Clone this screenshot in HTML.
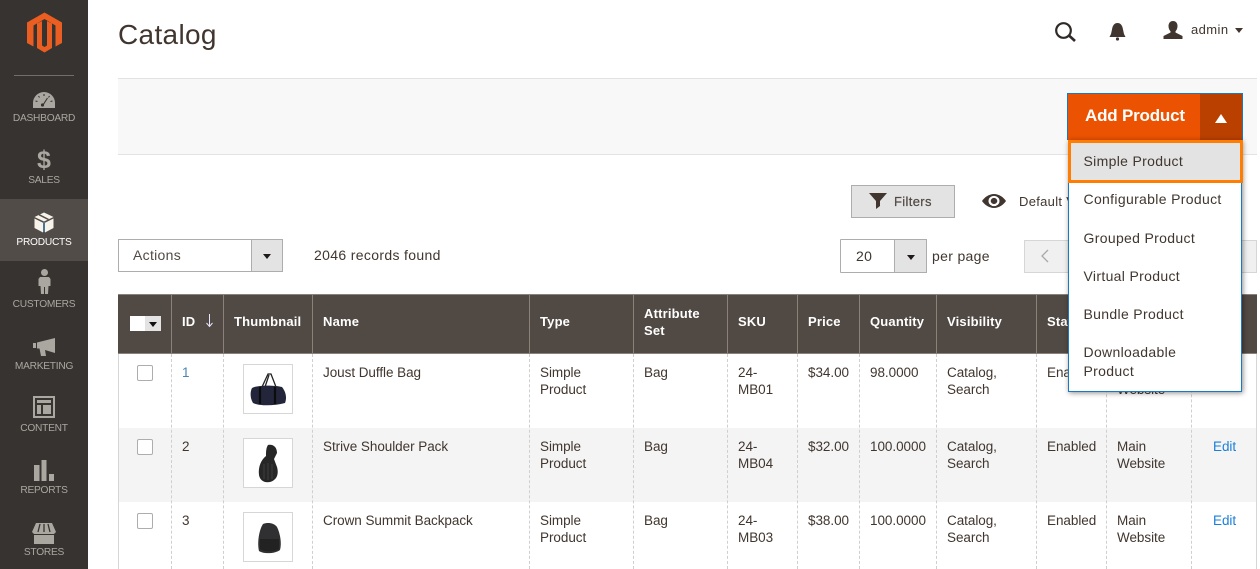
<!DOCTYPE html>
<html><head><meta charset="utf-8"><style>
html,body{margin:0;padding:0;background:#fff}
#p{position:relative;width:1260px;height:569px;overflow:hidden;background:#fff;font-family:"Liberation Sans",sans-serif;font-size:13.5px;color:#41362f;letter-spacing:-.05px}
#p div,#p svg,#p span.a{position:absolute}
.t{white-space:nowrap;line-height:17px}
.h{white-space:nowrap;line-height:17px;color:#fff;font-weight:bold;font-size:13px;letter-spacing:.18px}
.n{left:0;width:88px;text-align:center;font-size:10.2px;letter-spacing:-.25px;color:#aaa6a0;line-height:12px;white-space:nowrap}
.v{width:0;top:354px;height:215px;border-left:1px dashed #cfcfcf}
.hv{width:1px;top:295px;height:58px;background:#8a817b}
.m{left:1083.5px;white-space:nowrap;font-size:14px;letter-spacing:.33px;line-height:19px;color:#41362f}
.thumb{left:243px;width:48px;height:48px;border:1px solid #d6d6d6;background:#fff}
.cb{left:137px;width:14px;height:14px;border:1px solid #adadad;border-radius:2px;background:#fff}
.e{color:#1a7fd8}
</style></head><body><div id="p">
<div style="left:0;top:0;width:88px;height:569px;background:#373330"></div>
<div style="left:0;top:199px;width:88px;height:62px;background:#514c47"></div>
<svg style="left:27px;top:12px" width="36" height="41" viewBox="0 0 36 41"><path fill="#eb5e21" d="M17.500 .5L35 10.500V31L28.500 34.500V13.500L17.500 7 6.500 13.500V34.500L0 31V10.500ZM10 11.500L15 9V33.500L17.500 35 20 33.500V9L25 11.500V36L17.500 40.500 10 36Z"/></svg>
<div style="left:14px;top:75px;width:60px;height:1px;background:#736e69"></div>

<svg style="left:33px;top:92px" width="22" height="16" viewBox="0 0 22 16"><path fill="#aaa6a0" d="M11 0A11 11 0 0 0 0 11V16H22V11A11 11 0 0 0 11 0Z"/><path stroke="#373330" stroke-width="1.100" fill="none" d="M11 2V4M5.500 4L6.500 5.500M2.500 9L4.500 9.500M16.500 4L15.500 5.500M19.500 9L17.500 9.500M14.500 6L10 13"/><circle cx="9.500" cy="13" r="1.600" fill="#373330"/></svg>
<div class="n" style="top:113px">DASHBOARD</div>
<div class="a" style="left:0;width:88px;top:146px;text-align:center;font-size:25px;line-height:28px;font-weight:bold;color:#aaa6a0;letter-spacing:0">$</div>
<div class="n" style="top:175px">SALES</div>
<svg style="left:34px;top:212px" width="20" height="21" viewBox="0 0 20 21"><path fill="#f7f3eb" d="M10 .5L19.500 5 10 9.500 .5 5ZM.5 6.500L9 10.700V20.500L.5 16ZM11 10.700L19.500 6.500V16L11 20.500Z"/><path stroke="#514c47" stroke-width="1.500" d="M5 2.700L14.500 7.500"/><path stroke="#45a5d8" stroke-width="1" d="M10 10V20"/></svg>
<div class="n" style="top:237px;color:#fff">PRODUCTS</div>
<svg style="left:38px;top:269px" width="13" height="25" viewBox="0 0 13 25"><circle cx="6.500" cy="3.500" r="3.500" fill="#aaa6a0"/><path fill="#aaa6a0" d="M2 8H11L12.500 10V17H10.500L10 25H7V18H6V25H3L2.500 17H.5V10Z"/></svg>
<div class="n" style="top:299px">CUSTOMERS</div>
<svg style="left:33px;top:338px" width="23" height="19" viewBox="0 0 23 19"><path fill="#aaa6a0" d="M0 5H3V10H0ZM4 4.500L22 0V15L12 12 13 18H8L6.500 10.500H4Z"/></svg>
<div class="n" style="top:361px">MARKETING</div>
<svg style="left:33px;top:396px" width="22" height="22" viewBox="0 0 22 22"><path fill="#aaa6a0" fill-rule="evenodd" d="M0 0H22V22H0ZM2 2V20H20V2ZM4 4H18V7H4ZM4 9H8V18H4ZM10 9H18V18H10Z"/></svg>
<div class="n" style="top:423px">CONTENT</div>
<svg style="left:34px;top:460px" width="20" height="21" viewBox="0 0 20 21"><path fill="#aaa6a0" d="M0 5H5.500V21H0ZM7.500 0H12.500V21H7.500ZM15 14H20V21H15Z"/></svg>
<div class="n" style="top:485px">REPORTS</div>
<svg style="left:32px;top:523px" width="24" height="21" viewBox="0 0 24 21"><path fill="#aaa6a0" d="M4 0H20L24 9 22 11H2L0 9ZM2 12H22V21H2Z"/><path stroke="#373330" stroke-width="1.300" d="M8 1L6 9M12 1V9M16 1L18 9"/></svg>
<div class="n" style="top:547px">STORES</div>

<div class="t" style="left:118px;top:16px;font-size:28px;line-height:38px;letter-spacing:.33px;color:#41362f">Catalog</div>
<svg style="left:1055px;top:22px" width="21" height="20" viewBox="0 0 21 20"><circle cx="8.500" cy="8.500" r="7.300" fill="none" stroke="#2f2a27" stroke-width="2.200"/><path stroke="#2f2a27" stroke-width="2.600" d="M14 13.500L20 19"/></svg>
<svg style="left:1109px;top:23px" width="17" height="18" viewBox="0 0 17 18"><path fill="#41362f" d="M8.500 0C12 0 13.500 3 14 6.500L15 11 16.500 14H.5L2 11 3 6.500C3.500 3 5 0 8.500 0Z"/><circle cx="8.500" cy="16" r="1.600" fill="#41362f"/></svg>
<svg style="left:1163px;top:21px" width="20" height="18" viewBox="0 0 20 18"><path fill="#41362f" d="M10 0C13 0 14.500 2.300 14.500 5 14.500 7.500 13.500 9.300 12.500 10.300V11.500L19.500 15V18H.5V15L7.500 11.500V10.300C6.500 9.300 5.500 7.500 5.500 5 5.500 2.300 7 0 10 0Z"/></svg>
<div class="t" style="left:1191px;top:21px;font-size:13px;letter-spacing:.42px">admin</div>
<div style="left:1235px;top:28px;border:4px solid transparent;border-top:5px solid #41362f;border-bottom:0"></div>

<div style="left:118px;top:78px;width:1139px;height:75px;background:#f8f8f8;border-top:1px solid #e3e3e3;border-bottom:1px solid #e3e3e3"></div>
<div style="left:1067px;top:93px;width:133px;height:46px;background:#eb5202;border-top:1px solid #1979c3;border-left:1px solid #1979c3"></div>
<div style="left:1200px;top:93px;width:42px;height:46px;background:#ba4000;border-top:1px solid #1979c3;border-right:1px solid #1979c3"></div>
<div class="t" style="left:1085px;top:105px;font-size:17px;line-height:22px;font-weight:bold;color:#fff;letter-spacing:-.2px">Add Product</div>
<div style="left:1215px;top:114px;border:6px solid transparent;border-bottom:9px solid #fff;border-top:0"></div>

<div style="left:851px;top:185px;width:102px;height:31px;background:#e3e3e3;border:1px solid #adadad"></div>
<svg style="left:869px;top:193px" width="18" height="16" viewBox="0 0 18 16"><path fill="#41362f" d="M0 0H18L11 8V13L7 16V8Z"/></svg>
<div class="t" style="left:894px;top:193px;font-size:13px;color:#514943;letter-spacing:.35px;-webkit-text-stroke:.2px #514943">Filters</div>
<svg style="left:982px;top:194px" width="24" height="14" viewBox="0 0 24 15" preserveAspectRatio="none"><path fill="#41362f" d="M12 0C17 0 21.500 3.500 24 7.500 21.500 11.500 17 15 12 15 7 15 2.500 11.500 0 7.500 2.500 3.500 7 0 12 0Z"/><circle cx="12" cy="7.500" r="5.500" fill="#fff"/><circle cx="12" cy="7.500" r="3.300" fill="#41362f"/></svg>
<div class="t" style="left:1019px;top:193px;font-size:13px;letter-spacing:.3px;width:49px;overflow:hidden">Default View</div>

<div style="left:118px;top:239px;width:132px;height:31px;background:#fff;border:1px solid #adadad"></div>
<div style="left:251px;top:239px;width:30px;height:31px;background:#e3e3e3;border:1px solid #adadad"></div>
<div style="left:263px;top:254px;border:4px solid transparent;border-top:5px solid #1f1a17;border-bottom:0"></div>
<div class="t" style="left:133px;top:247px;color:#514943;font-size:14px;letter-spacing:.3px">Actions</div>
<div class="t" style="left:314px;top:247px;font-size:14px;letter-spacing:.34px">2046 records found</div>
<div style="left:840px;top:239px;width:53px;height:32px;background:#fff;border:1px solid #adadad;border-radius:1px"></div>
<div style="left:894px;top:239px;width:31px;height:32px;background:#e3e3e3;border:1px solid #adadad"></div>
<div style="left:907px;top:255px;border:4px solid transparent;border-top:5px solid #1f1a17;border-bottom:0"></div>
<div class="t" style="left:856px;top:248px;font-size:14px;letter-spacing:.3px">20</div>
<div class="t" style="left:932px;top:248px;font-size:14px;letter-spacing:.33px">per page</div>
<div style="left:1024px;top:240px;width:231px;height:31px;background:#f0f0f0;border:1px solid #d6d6d6;box-sizing:content-box"></div>
<svg style="left:1040px;top:249px" width="10" height="14" viewBox="0 0 10 14"><path fill="none" stroke="#a9a9a9" stroke-width="1.300" d="M8 1L2 7 8 13"/></svg>

<div style="left:118px;top:294px;width:1139px;background:#514943;border-top:1px solid #8a817b;border-bottom:1px solid #8a817b;box-sizing:border-box;height:60px"></div>
<div class="hv" style="left:171px"></div><div class="hv" style="left:223px"></div><div class="hv" style="left:312px"></div><div class="hv" style="left:529px"></div><div class="hv" style="left:633px"></div><div class="hv" style="left:727px"></div><div class="hv" style="left:797px"></div><div class="hv" style="left:859px"></div><div class="hv" style="left:936px"></div><div class="hv" style="left:1036px"></div><div class="hv" style="left:1106px"></div><div class="hv" style="left:1191px"></div>
<div style="left:130px;top:316px;width:15px;height:15px;background:#fff"></div>
<div style="left:145px;top:316px;width:16px;height:15px;background:#e3e3e3"></div>
<div style="left:149px;top:322px;border:4px solid transparent;border-top:5px solid #111;border-bottom:0"></div>
<div class="h" style="left:182px;top:313px">ID</div>
<svg style="left:205px;top:313px" width="9" height="15" viewBox="0 0 9 15"><path fill="none" stroke="#e8e4ff" stroke-width="1" d="M4.500 1V13M1.500 10L4.500 13.500 7.500 10"/></svg>
<div class="h" style="left:234px;top:313px">Thumbnail</div>
<div class="h" style="left:323px;top:313px">Name</div>
<div class="h" style="left:540px;top:313px">Type</div>
<div class="h" style="left:644px;top:305px">Attribute<br>Set</div>
<div class="h" style="left:738px;top:313px">SKU</div>
<div class="h" style="left:808px;top:313px">Price</div>
<div class="h" style="left:870px;top:313px">Quantity</div>
<div class="h" style="left:947px;top:313px">Visibility</div>
<div class="h" style="left:1047px;top:313px">Status</div>

<div style="left:118px;top:428px;width:1139px;height:74px;background:#f4f4f4"></div>
<div class="v" style="left:171px"></div><div class="v" style="left:223px"></div><div class="v" style="left:312px"></div><div class="v" style="left:529px"></div><div class="v" style="left:633px"></div><div class="v" style="left:727px"></div><div class="v" style="left:797px"></div><div class="v" style="left:859px"></div><div class="v" style="left:936px"></div><div class="v" style="left:1036px"></div><div class="v" style="left:1106px"></div><div class="v" style="left:1191px"></div>
<div style="left:118px;top:354px;width:1px;height:215px;background:#d6d6d6"></div>
<div style="left:1256px;top:354px;width:1px;height:215px;background:#d6d6d6"></div>

<div class="cb" style="top:365px"></div>
<div class="t" style="left:182px;top:364px;color:#4a86b5">1</div>
<div class="thumb" style="top:364px"><svg style="left:0;top:0" width="48" height="48" viewBox="0 0 48 48"><path fill="none" stroke="#222" stroke-width="1.300" d="M18 22L24 9H27L32 22M21 22L25 10"/><path fill="#23263a" d="M8 23C13 20 30 20 38 22 42 27 43 33 41 38 30 41 15 41 9 38 6 33 6 27 8 23Z"/><path stroke="#0c0c0c" stroke-width="2.200" d="M16 22V39M31 22V39"/></svg></div>
<div class="t" style="left:323px;top:364px">Joust Duffle Bag</div>
<div class="t" style="left:540px;top:364px">Simple<br>Product</div>
<div class="t" style="left:644px;top:364px">Bag</div>
<div class="t" style="left:738px;top:364px">24-<br>MB01</div>
<div class="t" style="left:808px;top:364px">$34.00</div>
<div class="t" style="left:870px;top:364px">98.0000</div>
<div class="t" style="left:947px;top:364px">Catalog,<br>Search</div>
<div class="t" style="left:1047px;top:364px">Enabled</div>
<div class="t" style="left:1117px;top:364px">Main<br>Website</div>

<div class="cb" style="top:439px"></div>
<div class="t" style="left:182px;top:438px">2</div>
<div class="thumb" style="top:438px"><svg style="left:0;top:0" width="48" height="48" viewBox="0 0 48 48"><path fill="#262626" d="M24 6C29 5 33 8 33 14L30 20 33 28C35 35 33 41 26 43 21 44 16 42 15 36 14 28 17 21 22 17 22 13 22 9 24 6Z"/><path stroke="#4a4a4a" stroke-width=".7" d="M20 25V40M24 24V41M28 25V40"/></svg></div>
<div class="t" style="left:323px;top:438px">Strive Shoulder Pack</div>
<div class="t" style="left:540px;top:438px">Simple<br>Product</div>
<div class="t" style="left:644px;top:438px">Bag</div>
<div class="t" style="left:738px;top:438px">24-<br>MB04</div>
<div class="t" style="left:808px;top:438px">$32.00</div>
<div class="t" style="left:870px;top:438px">100.0000</div>
<div class="t" style="left:947px;top:438px">Catalog,<br>Search</div>
<div class="t" style="left:1047px;top:438px">Enabled</div>
<div class="t" style="left:1117px;top:438px">Main<br>Website</div>
<div class="t e" style="left:1213px;top:438px">Edit</div>

<div class="cb" style="top:513px"></div>
<div class="t" style="left:182px;top:512px">3</div>
<div class="thumb" style="top:512px"><svg style="left:0;top:0" width="48" height="48" viewBox="0 0 48 48"><path fill="#303032" d="M19 11C24 9 30 10 33 14 36 20 38 30 36 37 31 41 19 41 15 38 13 30 15 17 19 11Z"/><path fill="#222" d="M16 26H35V36C30 39 20 39 16 36Z"/></svg></div>
<div class="t" style="left:323px;top:512px">Crown Summit Backpack</div>
<div class="t" style="left:540px;top:512px">Simple<br>Product</div>
<div class="t" style="left:644px;top:512px">Bag</div>
<div class="t" style="left:738px;top:512px">24-<br>MB03</div>
<div class="t" style="left:808px;top:512px">$38.00</div>
<div class="t" style="left:870px;top:512px">100.0000</div>
<div class="t" style="left:947px;top:512px">Catalog,<br>Search</div>
<div class="t" style="left:1047px;top:512px">Enabled</div>
<div class="t" style="left:1117px;top:512px">Main<br>Website</div>
<div class="t e" style="left:1213px;top:512px">Edit</div>

<div style="left:1068px;top:140px;width:172px;height:250px;background:#fff;border:1px solid #1979c3;box-shadow:1px 1px 5px rgba(0,0,0,.45)"></div>
<div style="left:1068px;top:140px;width:169px;height:37px;background:#e3e3e3;border:3px solid #ff7d00"></div>
<div class="m" style="top:152px">Simple Product</div>
<div class="m" style="top:190px">Configurable Product</div>
<div class="m" style="top:229px">Grouped Product</div>
<div class="m" style="top:267px">Virtual Product</div>
<div class="m" style="top:305px">Bundle Product</div>
<div class="m" style="top:343px">Downloadable<br>Product</div>
</div></body></html>
